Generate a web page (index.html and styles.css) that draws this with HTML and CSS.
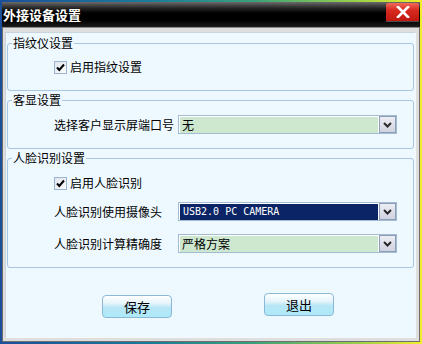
FILE: index.html
```html
<!DOCTYPE html>
<html lang="zh-CN">
<head>
<meta charset="utf-8">
<title>外接设备设置</title>
<link rel="stylesheet" href="styles.css">
</head>
<body>
<div class="window">
  <div class="titlebar">
    <span class="title">外接设备设置</span>
    <span class="close"><svg width="14" height="12" viewBox="0 0 14 12"><path d="M2 1 L12 11 M12 1 L2 11" stroke="#fff" stroke-width="2.6" stroke-linecap="square"/></svg></span>
  </div>
  <div class="frame">
    <div class="content">
      <fieldset class="group g1">
        <legend>指纹仪设置</legend>
        <div class="inner">
          <label class="check"><span class="box"><svg width="11" height="11" viewBox="0 0 11 11"><path d="M2 5.5 L4.3 8 L9 2.5" fill="none" stroke="#000" stroke-width="2"/></svg></span>启用指纹设置</label>
        </div>
      </fieldset>
      <fieldset class="group g2">
        <legend>客显设置</legend>
        <div class="inner">
          <div class="row">
            <span class="label">选择客户显示屏端口号</span>
            <div class="combo"><span class="value">无</span><span class="drop"><svg width="9" height="6" viewBox="0 0 9 6"><path d="M1 1 L4.5 4.5 L8 1" fill="none" stroke="#2a2a2a" stroke-width="2"/></svg></span></div>
          </div>
        </div>
      </fieldset>
      <fieldset class="group g3">
        <legend>人脸识别设置</legend>
        <div class="inner">
          <label class="check"><span class="box"><svg width="11" height="11" viewBox="0 0 11 11"><path d="M2 5.5 L4.3 8 L9 2.5" fill="none" stroke="#000" stroke-width="2"/></svg></span>启用人脸识别</label>
          <div class="row row-cam">
            <span class="label">人脸识别使用摄像头</span>
            <div class="combo"><span class="value selected">USB2.0 PC CAMERA</span><span class="drop"><svg width="9" height="6" viewBox="0 0 9 6"><path d="M1 1 L4.5 4.5 L8 1" fill="none" stroke="#2a2a2a" stroke-width="2"/></svg></span></div>
          </div>
          <div class="row row-prec">
            <span class="label">人脸识别计算精确度</span>
            <div class="combo"><span class="value">严格方案</span><span class="drop"><svg width="9" height="6" viewBox="0 0 9 6"><path d="M1 1 L4.5 4.5 L8 1" fill="none" stroke="#2a2a2a" stroke-width="2"/></svg></span></div>
          </div>
        </div>
      </fieldset>
      <div class="actions">
        <button class="btn save">保存</button>
        <button class="btn exit">退出</button>
      </div>
    </div>
  </div>
</div>
</body>
</html>
```

FILE: styles.css
```css
* { box-sizing: border-box; }
html, body { margin: 0; padding: 0; }
body {
  font-family: "Noto Sans CJK SC", "Noto Sans", sans-serif;
  font-size: 12px;
  line-height: 14px;
  color: #000;
  background: #fff;
}
.window {
  width: 422px;
  height: 344px;
  padding: 2px;
  display: flex;
  flex-direction: column;
  background: linear-gradient(to right, #1b4f9a 0%, #1a7a9a 35%, #3aa07a 60%, #9ad048 85%, #f2ee2a 100%);
}
.titlebar {
  height: 25px;
  display: flex;
  justify-content: space-between;
  align-items: flex-start;
  background: linear-gradient(to bottom, #6a6a6a 0px, #262626 6px, #000 11px, #000 18px, #1c1c1c 25px);
}
.title {
  color: #fff;
  font-weight: bold;
  font-size: 13px;
  line-height: 14px;
  padding: 6px 0 0 1px;
}
.close {
  width: 33px;
  height: 19px;
  margin: 1px 1px 0 0;
  display: flex;
  align-items: center;
  justify-content: center;
  background: linear-gradient(to bottom, #f06a5a 0%, #d82a20 40%, #c01810 100%);
  border-bottom: 1px solid #4a4a4a;
  border-radius: 2px 2px 0 0;
}
.frame {
  flex: 1;
  border: 1px solid #6e6e6e;
  border-top-color: #8a8a8a;
  padding: 4px 3px 3px 2px;
  background: #dedede;
  display: flex;
}
.content {
  flex: 1;
  background: #eef8ff;
  border: 1px solid #c8d4de;
  border-right-color: #f4f8fb;
  border-bottom-color: #f4f8fb;
}
.group {
  border: 1px solid #a9c7e2;
  border-radius: 3px;
  margin: 3px 1px 0 1px;
  padding: 0;
  min-inline-size: 0;
}
.group legend {
  margin-left: 4px;
  padding: 0 1px;
  line-height: 14px;
}
.inner { padding-left: 46px; }
.g1 .inner { padding-top: 10px; padding-bottom: 16px; }
.g2 { margin-top: 2px; }
.g2 .inner { padding-top: 8px; padding-bottom: 14px; }
.g3 { margin-top: 2px; }
.g3 .inner { padding-top: 11px; padding-bottom: 14px; }
.check {
  display: flex;
  align-items: center;
  gap: 3px;
  height: 14px;
}
.box {
  width: 13px;
  height: 13px;
  border: 1px solid #9cb4d0;
  background: linear-gradient(135deg, #dfe6ee, #fbfcfd);
  display: flex;
  align-items: center;
  justify-content: center;
}
.row {
  display: grid;
  grid-template-columns: 124px 219px;
  align-items: center;
}
.row-cam { margin-top: 12px; }
.row-prec { margin-top: 13px; }
.combo {
  height: 19px;
  display: flex;
  border: 1px solid #a3bbd3;
  background: #fff;
  padding: 1px 0 0 1px;
}
.value {
  flex: 1;
  background: #cde8cf;
  padding-left: 2px;
  line-height: 16px;
  margin-right: 1px;
}
.value.selected {
  background: #0a2466;
  color: #fff;
  font-family: "DejaVu Sans Mono", "Liberation Mono", monospace;
  font-size: 10px;
  letter-spacing: 0;
  padding-left: 3px;
}
.drop {
  width: 17px;
  margin-top: -1px;
  border: 1px solid #8e9cb4;
  background: linear-gradient(to bottom, #eceef4, #cfd3e0);
  display: flex;
  align-items: center;
  justify-content: center;
}
.actions {
  display: flex;
  align-items: flex-start;
  padding-left: 96px;
  gap: 92px;
  margin-top: 25px;
}
.btn {
  width: 70px;
  height: 23px;
  border: 1px solid #8bb8d6;
  border-radius: 4px;
  background: linear-gradient(to bottom, #ffffff 0%, #e6f4fb 35%, #b8e6f6 55%, #aeeaf8 100%);
  font-family: "Noto Sans CJK SC", sans-serif;
  font-size: 13px;
  line-height: 14px;
  color: #000;
  padding: 0;
}
.save { margin-top: 2px; }
```
